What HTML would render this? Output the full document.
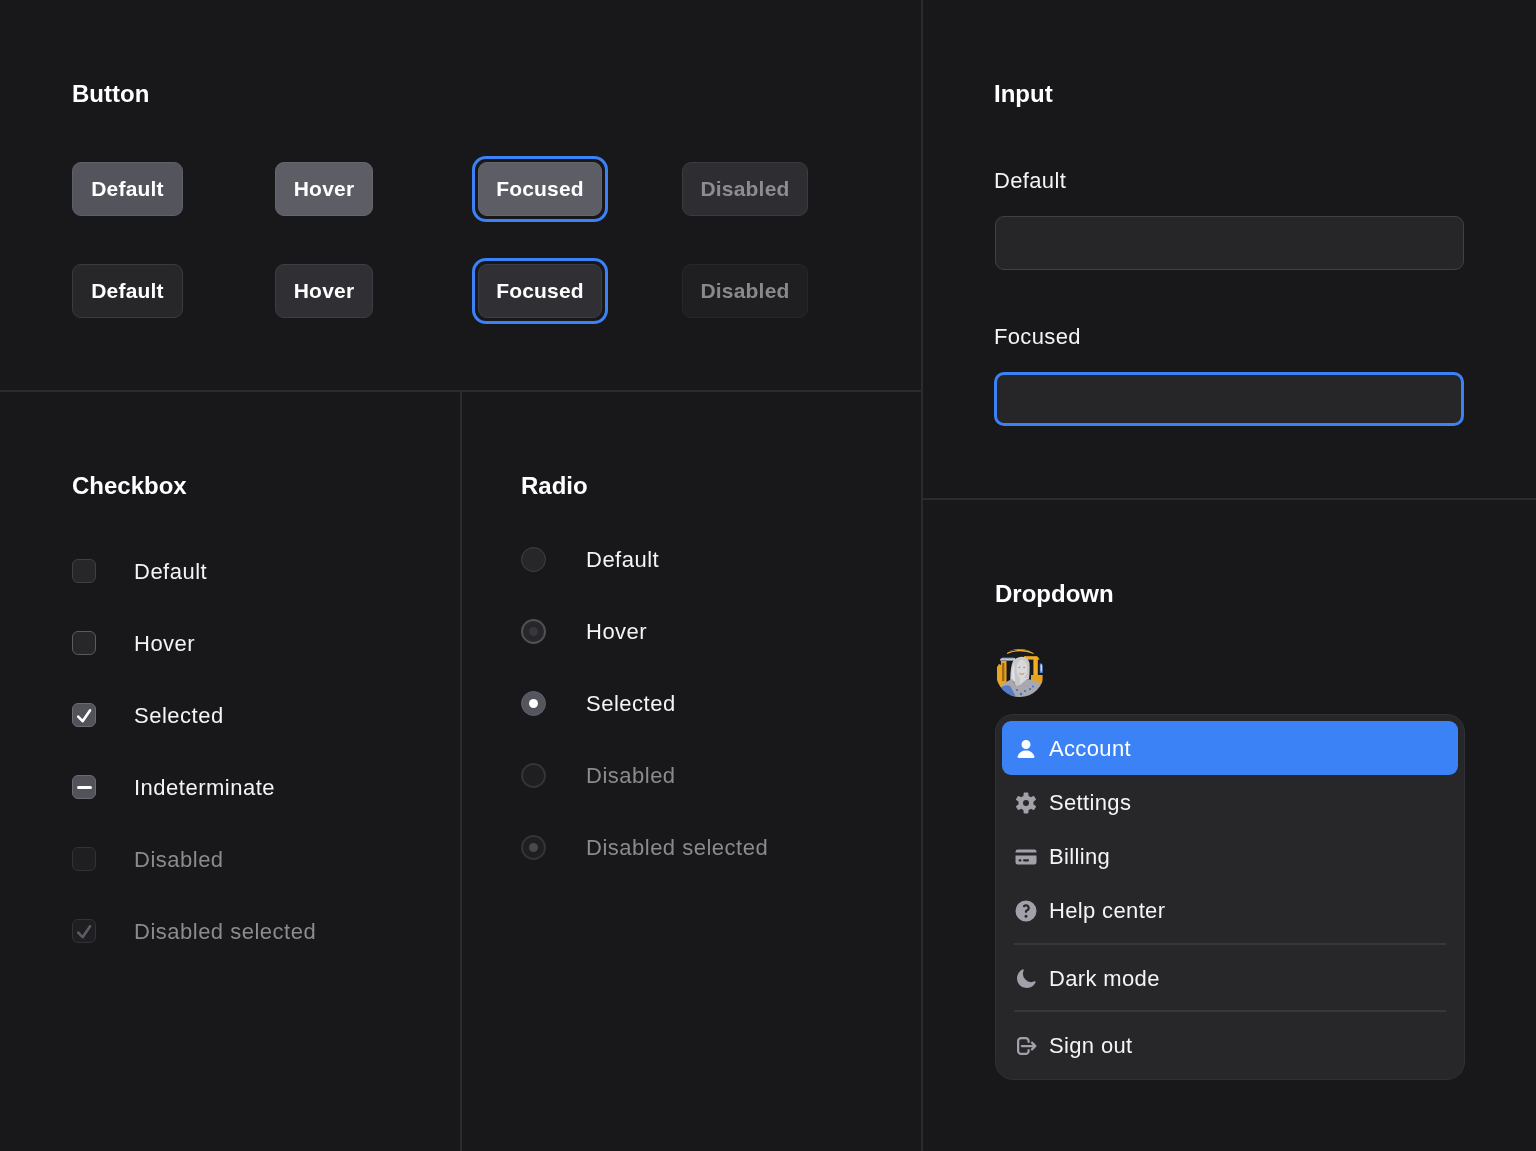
<!DOCTYPE html>
<html><head><meta charset="utf-8">
<style>
html,body{margin:0;padding:0;}
body{width:1536px;height:1151px;background:#18181b;position:relative;overflow:hidden;font-family:"Liberation Sans",sans-serif;color:#fafafa;}
.a{position:absolute;}
.t{position:absolute;line-height:1;white-space:nowrap;will-change:transform;}
.h{font-size:24px;font-weight:bold;color:#fff;}
.l{font-size:22px;letter-spacing:0.35px;color:#f4f4f5;}
.dis{color:#8a8a8f;}
.l2{letter-spacing:0.5px;}
.vl{position:absolute;width:2px;background:#2b2b2f;}
.hl{position:absolute;height:2px;background:#2b2b2f;}
.btn{position:absolute;box-sizing:border-box;height:54px;border-radius:9px;font-size:21px;font-weight:bold;color:#fff;text-align:center;}
.btn span{will-change:transform;position:absolute;left:0;right:0;top:14.6px;line-height:1;letter-spacing:0.2px;}
.b1{background:#54545c;border:1px solid #5f5f67;}
.b1h{background:#5d5d65;border:1px solid #66666e;}
.b1d{background:#2d2d32;border:1px solid #3a3a3f;color:#8c8c92;}
.b2{background:#27272a;border:1px solid #3a3a40;}
.b2h{background:#2f2f34;border:1px solid #3d3d44;}
.b2d{background:#1f1f22;border:1px solid #27272b;color:#88888d;}
.ring{position:absolute;box-sizing:border-box;border:3px solid #3b82f6;border-radius:14px;}
.cb{position:absolute;box-sizing:border-box;width:24px;height:24px;border-radius:6px;left:72px;}
.rd{position:absolute;box-sizing:border-box;width:25px;height:25px;border-radius:50%;left:521px;}
.ic{position:absolute;left:1014px;width:24px;height:24px;}
</style></head>
<body>
<!-- grid lines -->
<div class="vl" style="left:921px;top:0;height:1151px"></div>
<div class="vl" style="left:460px;top:390px;height:761px"></div>
<div class="hl" style="left:0;top:390px;width:921px"></div>
<div class="hl" style="left:921px;top:498px;width:615px"></div>

<!-- Button section -->
<div class="t h" style="left:72px;top:82px">Button</div>

<div class="btn b1" style="left:72px;top:162px;width:111px"><span>Default</span></div>
<div class="btn b1h" style="left:275px;top:162px;width:98px"><span>Hover</span></div>
<div class="ring" style="left:472px;top:156px;width:136px;height:66px"></div>
<div class="btn b1h" style="left:478px;top:162px;width:124px"><span>Focused</span></div>
<div class="btn b1d" style="left:682px;top:162px;width:126px"><span>Disabled</span></div>

<div class="btn b2" style="left:72px;top:264px;width:111px"><span>Default</span></div>
<div class="btn b2h" style="left:275px;top:264px;width:98px"><span>Hover</span></div>
<div class="ring" style="left:472px;top:258px;width:136px;height:66px"></div>
<div class="btn b2h" style="left:478px;top:264px;width:124px"><span>Focused</span></div>
<div class="btn b2d" style="left:682px;top:264px;width:126px"><span>Disabled</span></div>

<!-- Input section -->
<div class="t h" style="left:994px;top:82px">Input</div>
<div class="t l" style="left:994px;top:170px">Default</div>
<div class="a" style="left:995px;top:216px;width:469px;height:54px;box-sizing:border-box;border-radius:9px;background:#262629;border:1px solid #404047"></div>
<div class="t l" style="left:994px;top:326px">Focused</div>
<div class="a" style="left:994px;top:372px;width:470px;height:54px;box-sizing:border-box;border-radius:10px;background:#262629;border:3px solid #3b82f6"></div>

<!-- Checkbox section -->
<div class="t h" style="left:72px;top:474px">Checkbox</div>
<div class="cb" style="top:559px;background:#27272a;border:1px solid #3f3f46"></div>
<div class="t l l2" style="left:134px;top:561px">Default</div>
<div class="cb" style="top:631px;background:#27272a;border:1px solid #5a5a62"></div>
<div class="t l l2" style="left:134px;top:633px">Hover</div>
<div class="cb" style="top:703px;background:#52525b;border:1px solid #6b6b73"><svg width="24" height="24" viewBox="0 0 24 24" style="position:absolute;left:-1px;top:-1px"><path d="M6.2 13.7 L10.6 18.2 L18.1 7.3" fill="none" stroke="#fff" stroke-width="2.6" stroke-linecap="round" stroke-linejoin="round"/></svg></div>
<div class="t l l2" style="left:134px;top:705px">Selected</div>
<div class="cb" style="top:775px;background:#52525b;border:1px solid #6b6b73"><div class="a" style="left:4px;top:10px;width:15px;height:3px;border-radius:2px;background:#fff"></div></div>
<div class="t l l2" style="left:134px;top:777px">Indeterminate</div>
<div class="cb" style="top:847px;background:#1f1f22;border:1px solid #323237"></div>
<div class="t l l2 dis" style="left:134px;top:849px">Disabled</div>
<div class="cb" style="top:919px;background:#1f1f22;border:1px solid #323237"><svg width="24" height="24" viewBox="0 0 24 24" style="position:absolute;left:-1px;top:-1px"><path d="M6.2 13.7 L10.6 18.2 L18.1 7.3" fill="none" stroke="#5c5c63" stroke-width="2.6" stroke-linecap="round" stroke-linejoin="round"/></svg></div>
<div class="t l l2 dis" style="left:134px;top:921px">Disabled selected</div>

<!-- Radio section -->
<div class="t h" style="left:521px;top:474px">Radio</div>
<div class="rd" style="top:547px;background:#27272a;border:1px solid #3f3f46"></div>
<div class="t l l2" style="left:586px;top:549px">Default</div>
<div class="rd" style="top:619px;background:#27272a;border:2px solid #505058"><div class="a" style="left:6px;top:6px;width:9px;height:9px;border-radius:50%;background:#36363c"></div></div>
<div class="t l l2" style="left:586px;top:621px">Hover</div>
<div class="rd" style="top:691px;background:#55555d;border:1px solid #5f5f67"><div class="a" style="left:7px;top:7px;width:9px;height:9px;border-radius:50%;background:#fff"></div></div>
<div class="t l l2" style="left:586px;top:693px">Selected</div>
<div class="rd" style="top:763px;background:#1f1f22;border:2px solid #333338"></div>
<div class="t l l2 dis" style="left:586px;top:765px">Disabled</div>
<div class="rd" style="top:835px;background:#1f1f22;border:2px solid #333338"><div class="a" style="left:6px;top:6px;width:9px;height:9px;border-radius:50%;background:#48484e"></div></div>
<div class="t l l2 dis" style="left:586px;top:837px">Disabled selected</div>

<!-- Dropdown section -->
<div class="t h" style="left:995px;top:582px">Dropdown</div>
<svg class="a" style="left:996px;top:649px" width="48" height="48" viewBox="0 0 48 48">
<defs><clipPath id="avc"><circle cx="24" cy="24" r="24"/></clipPath></defs>
<g clip-path="url(#avc)">
<rect width="48" height="48" fill="#1a1a1d"/>
<path d="M11 5 Q24 -0.5 38 5 L38 3.6 Q24 -2 11 3.6Z" fill="#f2b129"/>
<path d="M13 2.4 Q24 -1.5 36 2.4 L36 1.2 Q24 -2.5 13 1.2Z" fill="#cfcfd4"/>
<rect x="4" y="9" width="15" height="2.6" fill="#c6c9d2"/>
<rect x="5" y="8.4" width="13" height="0.9" fill="#3d6ac0"/>
<path d="M1 38 L1 18 L3 15 L5 16 L5 12 L10.5 12 L10.5 38Z" fill="#e9a420"/>
<rect x="6" y="14" width="2.4" height="18" fill="#9b6a18"/>
<rect x="28" y="7.2" width="15.5" height="3.4" fill="#f0ae28"/>
<rect x="37.4" y="10" width="4.4" height="25" fill="#efac26"/>
<path d="M35 26 L46.6 26 L46.6 35 L35 35Z" fill="#e6a21f"/>
<rect x="43.8" y="14.5" width="3" height="9.5" fill="#4d7bd0"/>
<rect x="44.6" y="15.5" width="1.4" height="7" fill="#d8dbe3"/>
<path d="M14.5 38.8 Q13.5 20 17 12 Q21 7.5 26 7.7 Q32 8 33.5 14 Q34 22 33 30 L30 30 L29 38 Z" fill="#c7c7cc"/>
<path d="M15.5 36 Q15 22 18 14 Q18.5 28 19.5 36Z" fill="#e2e2e6"/>
<ellipse cx="25.8" cy="20" rx="5.3" ry="9.2" fill="#d9d9dd"/>
<rect x="22.5" y="17.8" width="1.7" height="1.3" fill="#d08a14"/>
<rect x="27.3" y="17.8" width="1.7" height="1.3" fill="#d08a14"/>
<path d="M23 23.5 Q25.8 26 28.6 23.5 L28 25 Q25.8 26.5 23.6 25Z" fill="#b98b3a"/>
<rect x="24" y="29" width="7" height="7" fill="#d8d8dc"/>
<path d="M18 32 L20 38 L17 40 L15 33Z" fill="#2a2a30"/>
<path d="M0 48 L3 39 Q8 33 16.4 30 L20 37 L24 36 L31 30 Q40 31 46 36 L48 48Z" fill="#a8a8ae"/>
<path d="M4 39 Q9 35 14 37 L19.4 46.6 L12 48 L2 48Z" fill="#3f6fcc" opacity="0.8"/>
<circle cx="29" cy="42" r="1.1" fill="#3f6ecc"/><circle cx="34" cy="40" r="1.1" fill="#3f6ecc"/><circle cx="25" cy="45" r="1.2" fill="#3f6ecc"/><circle cx="39" cy="44" r="1" fill="#3f6ecc"/><circle cx="37" cy="37.5" r="0.9" fill="#3f6ecc"/><circle cx="21" cy="41" r="1" fill="#3f6ecc"/>
</g></svg>

<div class="a" style="left:995px;top:714px;width:470px;height:366px;box-sizing:border-box;border-radius:18px;background:#27272a;border:1px solid #313135"></div>
<div class="a" style="left:1002px;top:721px;width:456px;height:54px;border-radius:9px;background:#3b82f6"></div>

<svg class="ic" style="top:736.5px" viewBox="0 0 16 16" fill="#fff"><path d="M8 8a3 3 0 1 0 0-6 3 3 0 0 0 0 6ZM12.735 14c.618 0 1.093-.561.872-1.139a6.002 6.002 0 0 0-11.215 0c-.22.578.254 1.139.872 1.139h9.47Z"/></svg>
<svg class="ic" style="top:790.5px" viewBox="0 0 16 16" fill="#a1a1aa"><path fill-rule="evenodd" d="M6.455 1.45A.5.5 0 0 1 6.952 1h2.096a.5.5 0 0 1 .497.45l.186 1.858a4.996 4.996 0 0 1 1.466.848l1.703-.769a.5.5 0 0 1 .639.206l1.047 1.814a.5.5 0 0 1-.14.656l-1.517 1.09a5.026 5.026 0 0 1 0 1.694l1.516 1.09a.5.5 0 0 1 .141.656l-1.047 1.814a.5.5 0 0 1-.639.206l-1.703-.768c-.433.36-.928.649-1.466.847l-.186 1.858a.5.5 0 0 1-.497.45H6.952a.5.5 0 0 1-.497-.45l-.186-1.858a4.993 4.993 0 0 1-1.466-.848l-1.703.769a.5.5 0 0 1-.639-.206l-1.047-1.814a.5.5 0 0 1 .14-.656l1.517-1.09a5.033 5.033 0 0 1 0-1.694l-1.516-1.09a.5.5 0 0 1-.141-.656L2.46 3.593a.5.5 0 0 1 .639-.206l1.703.769c.433-.36.928-.65 1.466-.848l.186-1.858ZM8 10a2 2 0 1 0 0-4 2 2 0 0 0 0 4Z" clip-rule="evenodd"/></svg>
<svg class="ic" style="top:844.5px" viewBox="0 0 16 16" fill="#a1a1aa"><path d="M2.5 3A1.5 1.5 0 0 0 1 4.5V5h14v-.5A1.5 1.5 0 0 0 13.5 3h-11Z"/><path fill-rule="evenodd" d="M15 7H1v4.5A1.5 1.5 0 0 0 2.5 13h11a1.5 1.5 0 0 0 1.5-1.5V7ZM3 10.25a.75.75 0 0 1 .75-.75h.5a.75.75 0 0 1 0 1.5h-.5a.75.75 0 0 1-.75-.75Zm3.75-.75a.75.75 0 0 0 0 1.5h2.5a.75.75 0 0 0 0-1.5h-2.5Z" clip-rule="evenodd"/></svg>
<svg class="ic" style="top:898.5px" viewBox="0 0 16 16" fill="#a1a1aa"><path fill-rule="evenodd" d="M15 8A7 7 0 1 1 1 8a7 7 0 0 1 14 0Zm-6 3.5a1 1 0 1 1-2 0 1 1 0 0 1 2 0ZM7.293 5.293a1 1 0 1 1 .99 1.667c-.459.134-1.033.566-1.033 1.29v.25a.75.75 0 1 0 1.5 0v-.115a2.5 2.5 0 1 0-2.518-4.153.75.75 0 1 0 1.061 1.06Z" clip-rule="evenodd"/></svg>
<svg class="ic" style="top:966.5px" viewBox="0 0 16 16" fill="#a1a1aa"><path d="M14.438 10.148c.19-.425-.321-.787-.748-.601A5.5 5.5 0 0 1 6.453 2.31c.186-.427-.176-.938-.6-.748a6.501 6.501 0 1 0 8.585 8.586Z"/></svg>
<svg class="ic" style="top:1033.5px" viewBox="0 0 16 16" fill="#a1a1aa"><path fill-rule="evenodd" d="M2 4.75A2.75 2.75 0 0 1 4.75 2h3a2.75 2.75 0 0 1 2.75 2.75v.5a.75.75 0 0 1-1.5 0v-.5c0-.69-.56-1.250-1.25-1.25h-3c-.69 0-1.25.56-1.25 1.25v6.5c0 .69.56 1.25 1.25 1.25h3c.69 0 1.25-.56 1.25-1.25v-.5a.75.75 0 0 1 1.5 0v.5A2.75 2.75 0 0 1 7.75 14h-3A2.75 2.75 0 0 1 2 11.25v-6.5Zm9.47.47a.75.75 0 0 1 1.06 0l2.25 2.25a.75.75 0 0 1 0 1.06l-2.25 2.25a.75.75 0 1 1-1.06-1.06l.97-.97H5.25a.75.75 0 0 1 0-1.5h7.19l-.97-.97a.75.75 0 0 1 0-1.06Z" clip-rule="evenodd"/></svg>
<div class="t l" style="left:1049px;top:738px;color:#fff">Account</div>
<div class="t l" style="left:1049px;top:792px">Settings</div>
<div class="t l" style="left:1049px;top:846px">Billing</div>
<div class="t l" style="left:1049px;top:900px">Help center</div>
<div class="a" style="left:1014px;top:943px;width:432px;height:2px;background:#36363b"></div>
<div class="t l" style="left:1049px;top:968px">Dark mode</div>
<div class="a" style="left:1014px;top:1010px;width:432px;height:2px;background:#36363b"></div>
<div class="t l" style="left:1049px;top:1035px">Sign out</div>

</body></html>
